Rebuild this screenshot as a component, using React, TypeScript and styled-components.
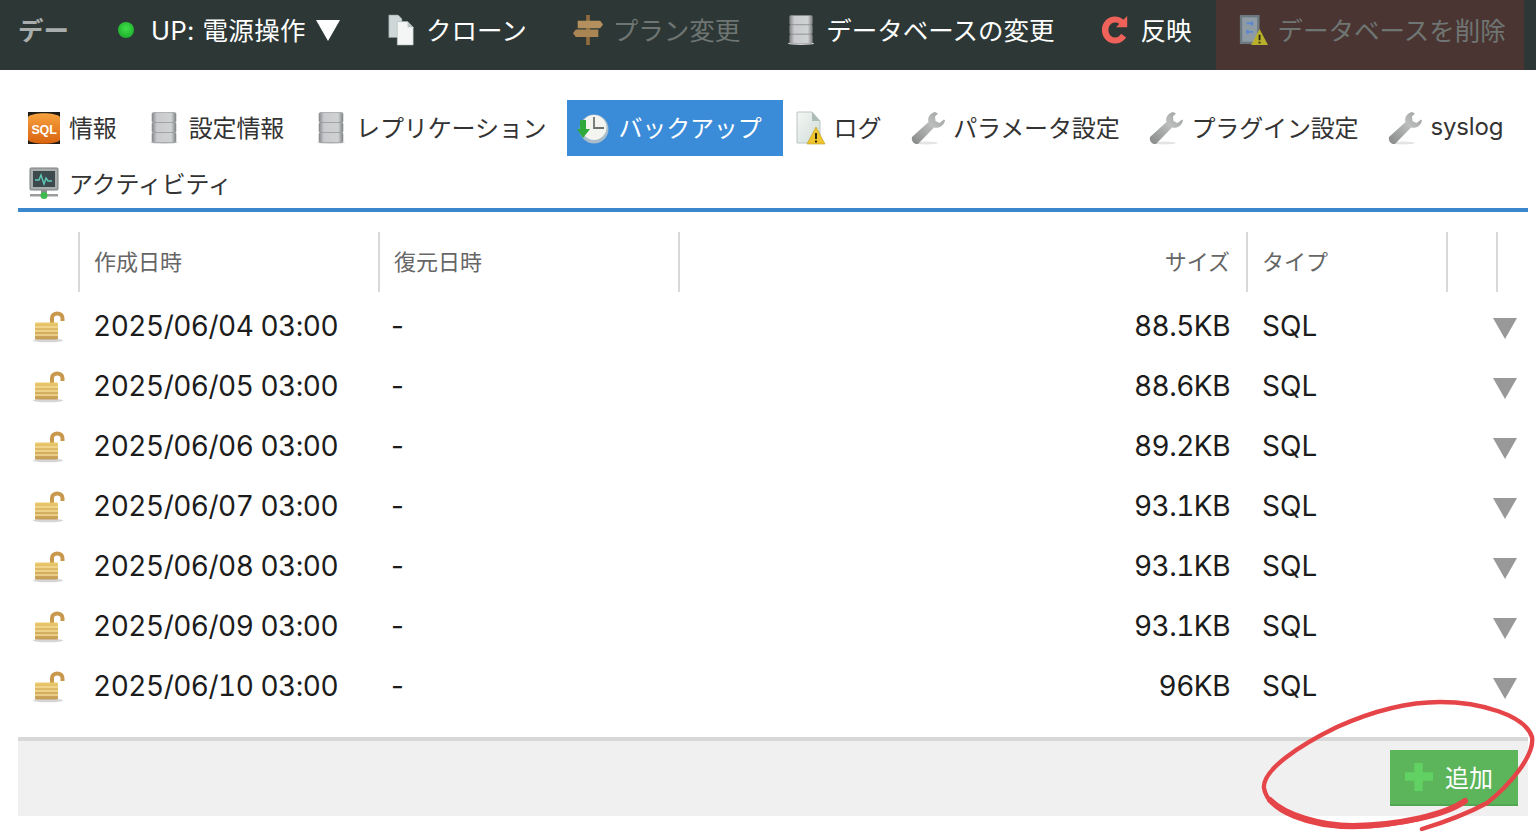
import styled, { createGlobalStyle } from "styled-components";

const FONT = `Inter, "Noto Sans CJK JP", sans-serif`;

const GlobalStyle = createGlobalStyle`
  html, body {
    margin: 0;
    padding: 0;
    background: #fff;
    overflow: hidden;
  }
  body {
    font-family: ${FONT};
    color: #222;
  }
`;

const Glyph = styled.svg.attrs({ viewBox: "0 0 32 32" })<{ $toolbar?: boolean }>`
  flex: none;
  width: ${(p) => (p.$toolbar ? "30px" : "32px")};
  height: ${(p) => (p.$toolbar ? "30px" : "32px")};
  margin: ${(p) => (p.$toolbar ? "0 -2px" : "0")};
  overflow: visible;
`;

type IconProps = { toolbar?: boolean };

const ServerIcon = ({ toolbar }: IconProps) => (
  <Glyph $toolbar={toolbar}>
    <defs>
      <linearGradient id="srv" x1="0" x2="1" y1="0" y2="0">
        <stop offset="0" stopColor="#85878a" />
        <stop offset="0.2" stopColor="#c9cace" />
        <stop offset="0.8" stopColor="#cfd2d2" />
        <stop offset="1" stopColor="#808284" />
      </linearGradient>
    </defs>
    <ellipse cx="16" cy="30.5" rx="14" ry="1.5" fill="#d8d8d8" />
    <rect x="4" y="0.5" width="24" height="10" rx="1.5" fill="url(#srv)" stroke="#8e9092" strokeWidth="0.6" />
    <rect x="4" y="10.5" width="24" height="10" rx="1.5" fill="url(#srv)" stroke="#8e9092" strokeWidth="0.6" />
    <rect x="4" y="20.5" width="24" height="10" rx="1.5" fill="url(#srv)" stroke="#8e9092" strokeWidth="0.6" />
  </Glyph>
);

const SqlIcon = () => (
  <Glyph>
    <defs>
      <linearGradient id="sqlBg" x1="0" x2="0" y1="0" y2="1">
        <stop offset="0" stopColor="#f7a23f" />
        <stop offset="1" stopColor="#d9630f" />
      </linearGradient>
    </defs>
    <rect width="32" height="32" fill="#1d1c19" />
    <path d="M0 5C4 0 28 0 32 5V28C28 33 4 33 0 28Z" fill="url(#sqlBg)" />
    <text x="16" y="22" textAnchor="middle" fontSize="12.5" fontWeight="700" fill="#fff" fontFamily="Liberation Sans">
      SQL
    </text>
  </Glyph>
);

const ClockIcon = () => (
  <Glyph>
    <circle cx="17" cy="17" r="14.5" fill="#a9bccb" />
    <circle cx="17" cy="15.5" r="12.5" fill="#f4f5f1" />
    <path d="M17 5v11h10" fill="none" stroke="#6c7470" strokeWidth="1.8" />
    <path d="M3 8h6v9h4l-7 9-6-9h3z" fill="#2fa93c" />
  </Glyph>
);

const LogIcon = () => (
  <Glyph>
    <defs>
      <linearGradient id="logPage" x1="0" x2="1" y1="0" y2="1">
        <stop offset="0" stopColor="#f4f7f4" />
        <stop offset="1" stopColor="#cfdcd8" />
      </linearGradient>
    </defs>
    <path d="M4 0H19L27 9V31H4Z" fill="url(#logPage)" stroke="#bcc6c4" />
    <path d="M19 0V9H27Z" fill="#aebcb9" />
    <path d="M23 15L32 32H14Z" fill="#eec52c" stroke="#b99a24" strokeWidth="0.6" />
    <path d="M23 21v6M23 28.5v2" stroke="#2a2410" strokeWidth="2" />
  </Glyph>
);

const WrenchIcon = () => (
  <Glyph>
    <defs>
      <linearGradient id="wrench" x1="0" x2="1" y1="1" y2="0">
        <stop offset="0" stopColor="#868787" />
        <stop offset="0.6" stopColor="#bcbdbd" />
        <stop offset="1" stopColor="#9d9e9e" />
      </linearGradient>
    </defs>
    <ellipse cx="14" cy="31" rx="12" ry="1.4" fill="#e4e4e4" />
    <path
      d="M23 0C18 1 15 6 16.5 10L0 25C-1 29 2 32.5 6 32L22 15.5C27 17 32 13.5 33 8.5L32 7.5L27.5 11L23.5 9L23 4.5L26 1.5Z"
      fill="url(#wrench)"
    />
  </Glyph>
);

const MonitorIcon = () => (
  <Glyph>
    <rect x="2" y="0" width="28" height="22" rx="1" fill="#a9adac" stroke="#7c8180" />
    <rect x="5" y="3" width="22" height="16" fill="#3c4a4e" />
    <path d="M7 12h4l2-5 3 9 2-6 2 3h4" fill="none" stroke="#5fc9b6" strokeWidth="1.4" />
    <rect x="13" y="22" width="6" height="4" fill="#8b8e8d" />
    <rect x="2" y="26" width="28" height="2.5" fill="#9a9d9c" />
    <circle cx="16" cy="27.5" r="3.5" fill="#40b94f" />
  </Glyph>
);

const CopyIcon = ({ toolbar }: IconProps) => (
  <Glyph $toolbar={toolbar}>
    <path d="M3 0H13L17 4V24H3Z" fill="#cfd8d8" stroke="#8d9898" strokeWidth="0.6" />
    <path d="M12 7H23L29 13V32H12Z" fill="#f3f6f5" stroke="#a8b2b1" strokeWidth="0.6" />
    <path d="M23 7V13H29Z" fill="#b9c4c3" />
  </Glyph>
);

const SignIcon = ({ toolbar }: IconProps) => (
  <Glyph $toolbar={toolbar}>
    <rect x="14" y="0" width="4" height="32" fill="#8f6c40" />
    <path d="M5 6H29L32 10L29 14H5Z" fill="#b5905f" />
    <path d="M3 15.5H27V23.5H3L0 19.5Z" fill="#a98554" />
  </Glyph>
);

const ReloadIcon = ({ toolbar }: IconProps) => (
  <Glyph $toolbar={toolbar}>
    <path
      d="M29 1L25 5C22 2.5 19 1.5 16 1.5C8 1.5 2 8 2 16C2 24 8 30.5 16 30.5C21 30.5 25 28 28 24L22.5 20C21 22.5 19 24 16 24C12 24 9 20.5 9 16C9 11.5 12 8 16 8C18 8 19.5 8.5 20.5 9.5L17 13H29Z"
      fill="#ee6259"
    />
  </Glyph>
);

const DeleteDbIcon = ({ toolbar }: IconProps) => (
  <Glyph $toolbar={toolbar}>
    <rect x="2" y="0" width="21" height="31" fill="#6c7880" />
    <rect x="4.5" y="2.5" width="16" height="26" fill="#8e9ba5" />
    <path d="M9 9h7M16 9l-2-2M16 9l-2 2M16 18H9M9 18l2-2M9 18l2 2" stroke="#5c86cf" strokeWidth="1.8" fill="none" />
    <path d="M23 15L32 32H14Z" fill="#b8b02c" />
    <path d="M23 21v6M23 28.5v2" stroke="#2f2a14" strokeWidth="2" />
  </Glyph>
);

const LockIcon = () => (
  <Glyph>
    <defs>
      <linearGradient id="lock" x1="0" x2="0" y1="0" y2="1">
        <stop offset="0" stopColor="#ecca6e" />
        <stop offset="1" stopColor="#c49c55" />
      </linearGradient>
    </defs>
    <ellipse cx="15" cy="30.5" rx="15" ry="1.8" fill="#d5d5d8" />
    <path d="M19 14V8C19 2 29.5 2 29.5 8V11" fill="none" stroke="#c8994c" strokeWidth="4" />
    <rect x="2" y="12.5" width="23" height="17" rx="1" fill="url(#lock)" />
    <path d="M2 17H25M2 21H25M2 25H25" stroke="#f3dc95" strokeWidth="1.4" />
  </Glyph>
);

const Page = styled.div`
  position: relative;
  width: 1536px;
  height: 834px;
  overflow: hidden;
  background: #fff;
`;

const Toolbar = styled.nav`
  display: flex;
  height: 70px;
  padding-left: 18px;
  background: #2d3836;
  font-size: 25.5px;
  color: #fff;
`;

const ToolItem = styled.div<{ $dim?: boolean; $danger?: boolean }>`
  display: flex;
  align-items: center;
  gap: 12px;
  padding: 0 ${(p) => (p.$danger ? "18px" : "24px")} 10px 24px;
  white-space: nowrap;
  color: ${(p) => (p.$dim ? "#6f7573" : "#fff")};
  background: ${(p) => (p.$danger ? "#4a3532" : "transparent")};
`;

const ToolLabel = styled.span`
  position: relative;
  top: -2px;
`;

const PowerLabel = styled(ToolLabel)`
  letter-spacing: 0.4px;
`;

const Section = styled.div`
  display: flex;
  align-items: center;
  padding: 0 20px 14px 0;
  color: #a9adac;
  font-weight: 700;
`;

const PowerDot = styled.span`
  width: 16px;
  height: 16px;
  margin: 0 5px;
  border-radius: 50%;
  background: radial-gradient(circle at 50% 40%, #3fe04a, #14a024);
`;

const Caret = styled.span`
  display: inline-block;
  width: 0;
  height: 0;
  margin-left: 10px;
  border-left: 12px solid transparent;
  border-right: 12px solid transparent;
  border-top: 21px solid #fff;
  vertical-align: -1px;
`;

const Content = styled.main`
  padding: 30px 8px 0 18px;
`;

const TabBar = styled.div`
  height: 108px;
  border-bottom: 4px solid #3a87cd;
`;

const TabList = styled.div`
  display: flex;
  flex-wrap: wrap;
`;

const Tab = styled.div<{ $active?: boolean }>`
  display: flex;
  align-items: center;
  gap: 9px;
  height: 56px;
  padding: 0 21px 0 10px;
  font-size: 24px;
  white-space: nowrap;
  letter-spacing: -0.15px;
  color: ${(p) => (p.$active ? "#fff" : "#333")};
  background: ${(p) => (p.$active ? "#3a8bd8" : "transparent")};
`;

const TabLabel = styled.span`
  position: relative;
  top: -2px;
`;

const COLUMNS = "60px 300px 300px 568px 200px 50px 32px";

const HeadRow = styled.div`
  display: grid;
  grid-template-columns: ${COLUMNS};
  height: 60px;
  margin: 20px 0 4px;
`;

const HeadCell = styled.div<{ $right?: boolean; $plain?: boolean }>`
  display: flex;
  align-items: center;
  justify-content: ${(p) => (p.$right ? "flex-end" : "flex-start")};
  padding: 0 16px 4px 14px;
  border-left: ${(p) => (p.$plain ? "0" : "2px solid #d9d9d9")};
  font-size: 22px;
  color: #666;
`;

const DataRow = styled.div`
  display: grid;
  grid-template-columns: ${COLUMNS};
  align-items: center;
  height: 60px;
  font-size: 28px;
  color: #1c1c1c;
`;

const LockCell = styled.div`
  display: flex;
  padding-left: 15px;
`;

const TextCell = styled.div`
  padding: 0 16px;
`;

const NumberCell = styled.div<{ $right?: boolean }>`
  padding: ${(p) => (p.$right ? "0 16px 0 0" : "0 0 0 15px")};
  text-align: ${(p) => (p.$right ? "right" : "left")};
  font-variant-numeric: tabular-nums;
  letter-spacing: -0.5px;
`;

const DashCell = styled.div`
  padding-left: 13px;
`;

const MenuCell = styled.div`
  grid-column: span 2;
  display: flex;
  justify-content: flex-end;
  padding: 4px 11px 0 0;
`;

const DownArrow = styled.span`
  width: 0;
  height: 0;
  border-left: 12px solid transparent;
  border-right: 12px solid transparent;
  border-top: 21px solid #999;
`;

const Footer = styled.footer`
  display: flex;
  justify-content: flex-end;
  height: 66px;
  margin-top: 21px;
  padding: 9px 10px 0 0;
  border-top: 4px solid #d8d8d8;
  background: #f0f0f0;
`;

const AddButton = styled.button`
  display: flex;
  align-items: center;
  gap: 12px;
  width: 128px;
  height: 56px;
  border: 0;
  border-bottom: 2px solid #52a752;
  padding: 0 0 0 15px;
  background: #5cb55b;
  color: #fff;
  font: 24px ${FONT};
`;

const AddLabel = styled.span`
  position: relative;
  top: -1px;
`;

const Annotation = styled.svg`
  position: absolute;
  inset: 0;
  width: 1536px;
  height: 834px;
  pointer-events: none;
`;

const BACKUPS = [
  { date: "2025/06/04 03:00", size: "88.5KB" },
  { date: "2025/06/05 03:00", size: "88.6KB" },
  { date: "2025/06/06 03:00", size: "89.2KB" },
  { date: "2025/06/07 03:00", size: "93.1KB" },
  { date: "2025/06/08 03:00", size: "93.1KB" },
  { date: "2025/06/09 03:00", size: "93.1KB" },
  { date: "2025/06/10 03:00", size: "96KB" },
];

const App = () => {
  return (
    <Page>
      <GlobalStyle />
      <Toolbar>
        <Section>デー</Section>
        <ToolItem>
          <PowerDot />
          <PowerLabel>
            UP: 電源操作
            <Caret />
          </PowerLabel>
        </ToolItem>
        <ToolItem>
          <CopyIcon toolbar />
          <ToolLabel>クローン</ToolLabel>
        </ToolItem>
        <ToolItem $dim>
          <SignIcon toolbar />
          <ToolLabel>プラン変更</ToolLabel>
        </ToolItem>
        <ToolItem>
          <ServerIcon toolbar />
          <ToolLabel>データベースの変更</ToolLabel>
        </ToolItem>
        <ToolItem>
          <ReloadIcon toolbar />
          <ToolLabel>反映</ToolLabel>
        </ToolItem>
        <ToolItem $dim $danger>
          <DeleteDbIcon toolbar />
          <ToolLabel>データベースを削除</ToolLabel>
        </ToolItem>
      </Toolbar>

      <Content>
        <TabBar>
          <TabList>
            <Tab>
              <SqlIcon />
              <TabLabel>情報</TabLabel>
            </Tab>
            <Tab>
              <ServerIcon />
              <TabLabel>設定情報</TabLabel>
            </Tab>
            <Tab>
              <ServerIcon />
              <TabLabel>レプリケーション</TabLabel>
            </Tab>
            <Tab $active>
              <ClockIcon />
              <TabLabel>バックアップ</TabLabel>
            </Tab>
            <Tab>
              <LogIcon />
              <TabLabel>ログ</TabLabel>
            </Tab>
            <Tab>
              <WrenchIcon />
              <TabLabel>パラメータ設定</TabLabel>
            </Tab>
            <Tab>
              <WrenchIcon />
              <TabLabel>プラグイン設定</TabLabel>
            </Tab>
            <Tab>
              <WrenchIcon />
              <TabLabel>syslog</TabLabel>
            </Tab>
            <Tab>
              <MonitorIcon />
              <TabLabel>アクティビティ</TabLabel>
            </Tab>
          </TabList>
        </TabBar>

        <HeadRow>
          <HeadCell $plain />
          <HeadCell>作成日時</HeadCell>
          <HeadCell>復元日時</HeadCell>
          <HeadCell $right>サイズ</HeadCell>
          <HeadCell>タイプ</HeadCell>
          <HeadCell />
          <HeadCell />
        </HeadRow>

        {BACKUPS.map((backup) => (
          <DataRow key={backup.date}>
            <LockCell>
              <LockIcon />
            </LockCell>
            <NumberCell>{backup.date}</NumberCell>
            <DashCell>-</DashCell>
            <NumberCell $right>{backup.size}</NumberCell>
            <TextCell>SQL</TextCell>
            <MenuCell>
              <DownArrow />
            </MenuCell>
          </DataRow>
        ))}

        <Footer>
          <AddButton>
            <svg width="28" height="28" viewBox="0 0 30 30">
              <path d="M10 0h9v10h11v9H19v11h-9V19H0v-9h10z" fill="#62d163" />
            </svg>
            <AddLabel>追加</AddLabel>
          </AddButton>
        </Footer>
      </Content>

      <Annotation viewBox="0 0 1536 834">
        <path
          d="M1465 801C1445 815 1400 826 1353 827C1310 827 1268 812 1264 788C1262 770 1300 745 1337 727C1375 710 1410 702 1440 702C1480 702 1525 715 1532 737C1535 755 1510 785 1487 803C1465 815 1445 822 1422 829"
          fill="none"
          stroke="#e54548"
          strokeWidth="4.4"
          strokeLinecap="round"
        />
        <path
          d="M1465 801C1445 815 1400 825 1353 826C1320 826 1285 815 1270 800"
          fill="none"
          stroke="#e54548"
          strokeWidth="6"
          strokeLinecap="round"
        />
      </Annotation>
    </Page>
  );
};

export default App;
